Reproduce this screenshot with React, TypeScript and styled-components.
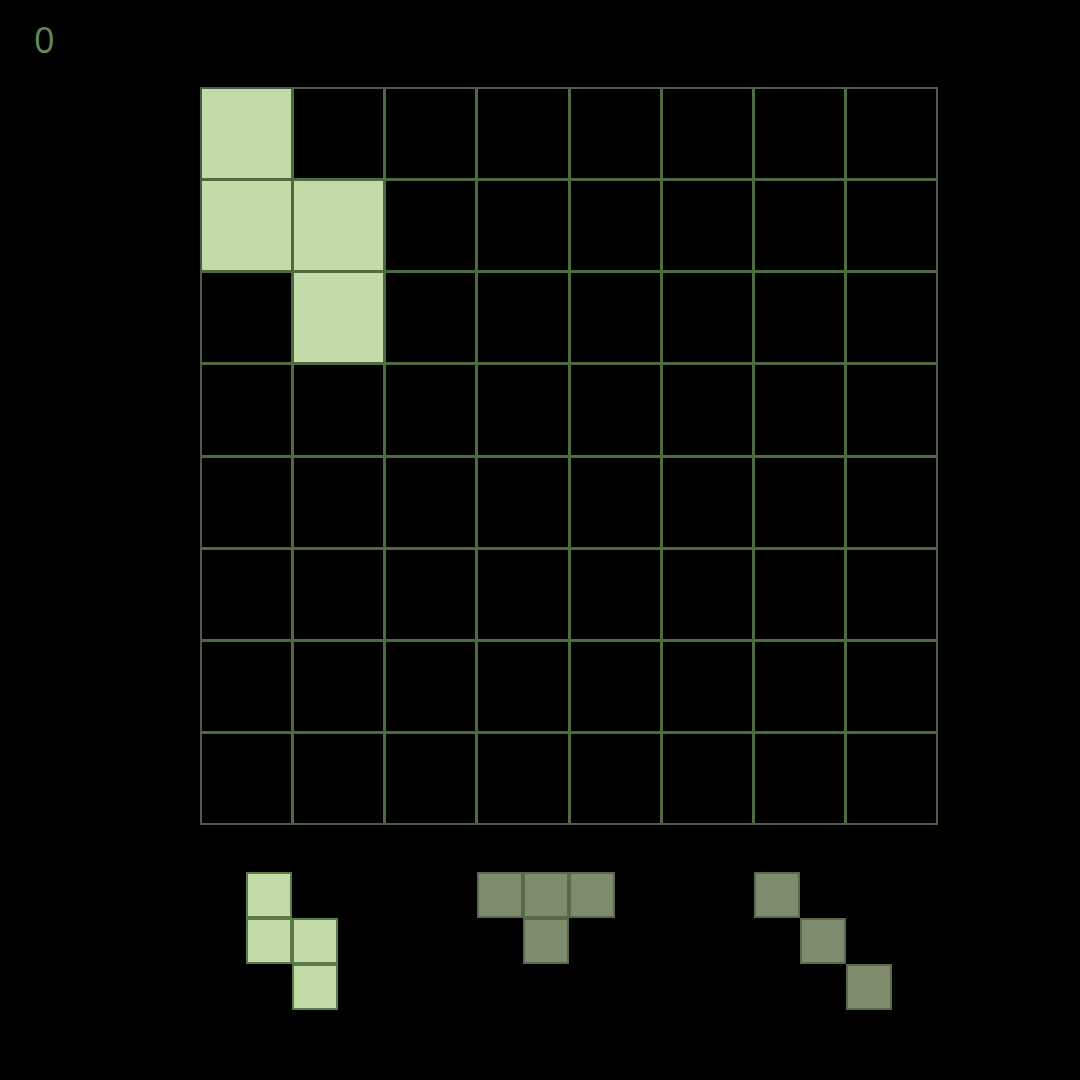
import React from "react";
import styled, { createGlobalStyle } from "styled-components";

// Board state: 8x8, 1 = filled
const board: number[][] = [
  [1, 0, 0, 0, 0, 0, 0, 0],
  [1, 1, 0, 0, 0, 0, 0, 0],
  [0, 1, 0, 0, 0, 0, 0, 0],
  [0, 0, 0, 0, 0, 0, 0, 0],
  [0, 0, 0, 0, 0, 0, 0, 0],
  [0, 0, 0, 0, 0, 0, 0, 0],
  [0, 0, 0, 0, 0, 0, 0, 0],
  [0, 0, 0, 0, 0, 0, 0, 0],
];

// Pieces in the tray: cells are [col, row] on a half-size grid under the board
interface Piece {
  id: string;
  active: boolean;
  cells: [number, number][];
}

const pieces: Piece[] = [
  { id: "s", active: true, cells: [[2, 1], [2, 2], [3, 2], [3, 3]] },
  { id: "t", active: false, cells: [[7, 1], [8, 1], [9, 1], [8, 2]] },
  { id: "d", active: false, cells: [[13, 1], [14, 2], [15, 3]] },
];

const App: React.FC = () => {
  return (
    <Page>
      <GlobalStyle />
      <Score>0</Score>
      <Board>
        {board.map((row, r) =>
          row.map((v, c) => <Cell key={`${r}-${c}`} filled={v === 1} />)
        )}
      </Board>
      <Tray>
        {pieces.map((p) =>
          p.cells.map(([col, row], i) => (
            <PieceCell
              key={`${p.id}-${i}`}
              active={p.active}
              col={col}
              row={row}
            />
          ))
        )}
      </Tray>
    </Page>
  );
};

const GlobalStyle = createGlobalStyle`
  html, body {
    margin: 0;
    padding: 0;
    background: #000;
  }
`;

const Page = styled.div`
  width: 1080px;
  height: 1080px;
  background: #000;
  font-family: "Open Sans", "Noto Sans", sans-serif;
  position: relative;
  overflow: hidden;
`;

const Score = styled.div`
  position: absolute;
  top: 18px;
  left: 34px;
  font-size: 36px;
  font-weight: 400;
  color: #668659;
  line-height: 1.2;
`;

const Board = styled.div`
  box-sizing: border-box;
  margin: 87px 0 0 200px;
  width: 738px;
  height: 738px;
  display: grid;
  grid-template-columns: repeat(8, 1fr);
  grid-template-rows: repeat(8, 1fr);
  gap: 3px;
  border: 2px solid #505b47;
  background: #4e6a40;
`;

const Cell = styled.div<{ filled: boolean }>`
  background: ${(p) => (p.filled ? "#c3dba6" : "#000")};
`;

const Tray = styled.div`
  margin: 47px 0 0 200px;
  width: 738px;
  display: grid;
  grid-template-columns: repeat(16, 1fr);
  grid-template-rows: repeat(3, 46px);
`;

const PieceCell = styled.div<{ active: boolean; col: number; row: number }>`
  grid-column: ${(p) => p.col};
  grid-row: ${(p) => p.row};
  box-sizing: border-box;
  border: 2px solid ${(p) => (p.active ? "#5b7a4b" : "#576b4c")};
  background: ${(p) => (p.active ? "#c3dba6" : "#7e8b6c")};
`;

export default App;
